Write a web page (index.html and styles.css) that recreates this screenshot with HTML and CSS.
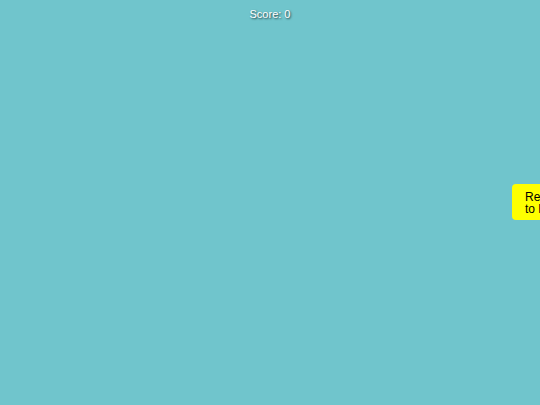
FILE: index.html
```html
<!DOCTYPE html>
<html>
<head>
<meta charset="utf-8">
<link rel="stylesheet" href="styles.css">
</head>
<body>
<div class="game">
  <div class="score">Score: 0</div>
  <button class="home-btn">Return to Home</button>
</div>
</body>
</html>
```
FILE: styles.css
```css
html, body {
  margin: 0;
  padding: 0;
  width: 100%;
  height: 100%;
  overflow: hidden;
}
body {
  background: #70c5cc;
  font-family: "Liberation Sans", Arial, sans-serif;
}
.game {
  position: relative;
  width: 540px;
  height: 405px;
}
.score {
  padding-top: 8px;
  text-align: center;
  color: #fff;
  font-size: 11px;
  line-height: 13px;
  text-shadow: 1px 1px 2px rgba(0,0,0,0.7);
}
.home-btn {
  position: absolute;
  left: 512px;
  top: 184px;
  box-sizing: content-box;
  width: 46px;
  height: 24px;
  padding: 7px 13px 5px;
  border: none;
  border-radius: 4px;
  background: #ffff00;
  color: #000;
  font-family: "Liberation Sans", Arial, sans-serif;
  font-size: 12px;
  line-height: 12px;
  text-align: left;
}
```
